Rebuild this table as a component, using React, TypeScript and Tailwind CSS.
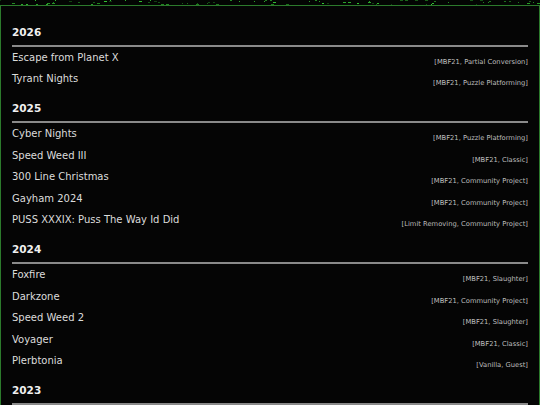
const sections = [
  {
    year: "2026",
    items: [
      ["Escape from Planet X", "MBF21, Partial Conversion"],
      ["Tyrant Nights", "MBF21, Puzzle Platforming"],
    ],
  },
  {
    year: "2025",
    items: [
      ["Cyber Nights", "MBF21, Puzzle Platforming"],
      ["Speed Weed III", "MBF21, Classic"],
      ["300 Line Christmas", "MBF21, Community Project"],
      ["Gayham 2024", "MBF21, Community Project"],
      ["PUSS XXXIX: Puss The Way Id Did", "Limit Removing, Community Project"],
    ],
  },
  {
    year: "2024",
    items: [
      ["Foxfire", "MBF21, Slaughter"],
      ["Darkzone", "MBF21, Community Project"],
      ["Speed Weed 2", "MBF21, Slaughter"],
      ["Voyager", "MBF21, Classic"],
      ["Plerbtonia", "Vanilla, Guest"],
    ],
  },
  { year: "2023", items: [] as string[][] },
];

// green specks of the background strip above the panel
const specks = Array.from({ length: 90 }, (_, i) => {
  const x = (i * 73 + ((i * i) % 17) * 5) % 540;
  const y = (i * 7) % 5;
  const g = 60 + ((i * 37) % 140);
  return { x, y, w: 1 + (i % 3), c: `rgb(${g / 4},${g},${g / 4})` };
});

function Strip() {
  return (
    <svg width="540" height="5" className="block">
      <rect width="540" height="5" fill="#030503" />
      {specks.map((s, i) => (
        <rect key={i} x={s.x} y={s.y} width={s.w} height="1" fill={s.c} />
      ))}
    </svg>
  );
}

export default function App() {
  return (
    <div className="w-[540px] h-[405px] overflow-hidden bg-black font-['DejaVu_Sans',sans-serif]">
      <Strip />
      <div className="border border-b-0 border-[#2c7a2c] bg-[#050505] pl-[11px] pr-[11px] pt-[7px] min-h-[400px]">
        {sections.map((s) => (
          <section key={s.year}>
            <h2 className="pt-[11.5px] pb-[6px] border-b-2 border-[#8a8a8a] text-[10.5px] leading-[14px] font-bold text-[#f0f0f0]">
              {s.year}
            </h2>
            <ul>
              {s.items.map(([title, tags]) => (
                <li key={title} className="h-[21.5px] flex justify-between items-start">
                  <span className="text-[10px] leading-[22px] text-[#dcdcdc]">{title}</span>
                  <span className="pt-[11px] text-[6.75px] leading-[8px] text-[#bdbdbd]">[{tags}]</span>
                </li>
              ))}
            </ul>
          </section>
        ))}
      </div>
    </div>
  );
}
